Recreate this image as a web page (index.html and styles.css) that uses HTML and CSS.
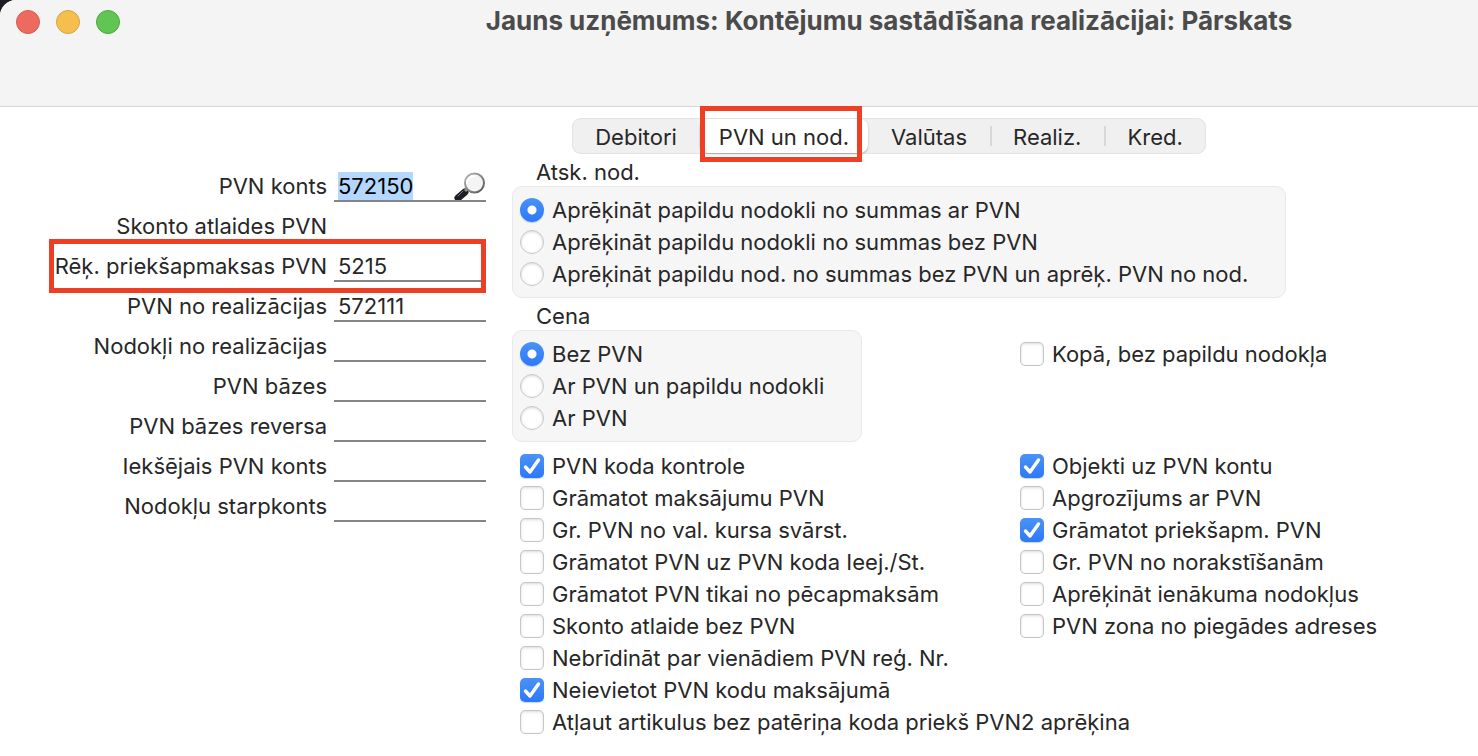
FILE: index.html
```html
<!DOCTYPE html>
<html lang="lv">
<head>
    <meta charset="UTF-8">
    <meta name="viewport" content="width=device-width, initial-scale=1.0">
    <title>Jauns uzņēmums: Kontējumu sastādīšana realizācijai: Pārskats</title>
    <link rel="stylesheet" href="styles.css">
</head>
<body>
    <div class="window">
        <header class="titlebar">
            <div class="window-buttons">
                <button type="button" class="window-button close" aria-label="Aizvērt"></button>
                <button type="button" class="window-button minimize" aria-label="Minimizēt"></button>
                <button type="button" class="window-button zoom" aria-label="Palielināt"></button>
            </div>
            <h1 class="window-title">Jauns uzņēmums: Kontējumu sastādīšana realizācijai: Pārskats</h1>
        </header>

        <nav class="tab-bar">
            <div class="tabs">
                <button type="button" class="tab">Debitori</button>
                <button type="button" class="tab active">PVN un nod.</button>
                <button type="button" class="tab">Valūtas</button>
                <button type="button" class="tab divided">Realiz.</button>
                <button type="button" class="tab divided">Kred.</button>
            </div>
        </nav>

        <form class="content">
            <div class="accounts">
                <div class="field">
                    <label for="pvnKonts">PVN konts</label>
                    <div class="field-box">
                        <input type="text" id="pvnKonts" value="572150">
                        <button type="button" class="lookup" aria-label="Meklēt">
                            <svg width="32" height="28" viewBox="0 0 32 28">
                                <defs>
                                    <linearGradient id="rim" x1="0" y1="0" x2="1" y2="1">
                                        <stop offset="0" stop-color="#b5b5b5"/>
                                        <stop offset="1" stop-color="#55575c"/>
                                    </linearGradient>
                                </defs>
                                <path d="M4 26 L11 20" stroke="#1d1f24" stroke-width="7" stroke-linecap="round"/>
                                <path d="M4 24 L9 19" stroke="#777b82" stroke-width="1" stroke-linecap="round"/>
                                <path d="M11 19 L14 16" stroke="#8a8d92" stroke-width="3"/>
                                <circle cx="20.500" cy="11" r="9.500" fill="#f4f4f4" stroke="url(#rim)" stroke-width="2"/>
                                <path d="M13 12 A7 7 0 0 1 21 4" fill="none" stroke="#fff" stroke-width="2"/>
                            </svg>
                        </button>
                    </div>
                </div>
                <div class="field">
                    <label for="skonto">Skonto atlaides PVN</label>
                    <div class="field-box plain"><input type="text" id="skonto"></div>
                </div>
                <div class="field marked">
                    <label for="priekspmaksas">Rēķ. priekšapmaksas PVN</label>
                    <div class="field-box"><input type="text" id="priekspmaksas" value="5215"></div>
                </div>
                <div class="field">
                    <label for="pvnRealiz">PVN no realizācijas</label>
                    <div class="field-box"><input type="text" id="pvnRealiz" value="572111"></div>
                </div>
                <div class="field">
                    <label for="nodokliRealiz">Nodokļi no realizācijas</label>
                    <div class="field-box"><input type="text" id="nodokliRealiz"></div>
                </div>
                <div class="field">
                    <label for="pvnBazes">PVN bāzes</label>
                    <div class="field-box"><input type="text" id="pvnBazes"></div>
                </div>
                <div class="field">
                    <label for="pvnReversa">PVN bāzes reversa</label>
                    <div class="field-box"><input type="text" id="pvnReversa"></div>
                </div>
                <div class="field">
                    <label for="ieksejais">Iekšējais PVN konts</label>
                    <div class="field-box"><input type="text" id="ieksejais"></div>
                </div>
                <div class="field">
                    <label for="starpkonts">Nodokļu starpkonts</label>
                    <div class="field-box"><input type="text" id="starpkonts"></div>
                </div>
            </div>

            <div class="options">
                <div class="group-title">Atsk. nod.</div>
                <div class="group">
                    <label class="option"><input type="radio" name="atsk" checked>Aprēķināt papildu nodokli no summas ar PVN</label>
                    <label class="option"><input type="radio" name="atsk">Aprēķināt papildu nodokli no summas bez PVN</label>
                    <label class="option"><input type="radio" name="atsk">Aprēķināt papildu nod. no summas bez PVN un aprēķ. PVN no nod.</label>
                </div>

                <div class="group-title">Cena</div>
                <div class="columns">
                    <div class="group">
                        <label class="option"><input type="radio" name="cena" checked>Bez PVN</label>
                        <label class="option"><input type="radio" name="cena">Ar PVN un papildu nodokli</label>
                        <label class="option"><input type="radio" name="cena">Ar PVN</label>
                    </div>
                    <div class="checks">
                        <label class="option"><input type="checkbox">Kopā, bez papildu nodokļa</label>
                    </div>
                </div>

                <div class="columns">
                    <div class="checks">
                        <label class="option"><input type="checkbox" checked>PVN koda kontrole</label>
                        <label class="option"><input type="checkbox">Grāmatot maksājumu PVN</label>
                        <label class="option"><input type="checkbox">Gr. PVN no val. kursa svārst.</label>
                        <label class="option"><input type="checkbox">Grāmatot PVN uz PVN koda Ieej./St.</label>
                        <label class="option"><input type="checkbox">Grāmatot PVN tikai no pēcapmaksām</label>
                        <label class="option"><input type="checkbox">Skonto atlaide bez PVN</label>
                        <label class="option"><input type="checkbox">Nebrīdināt par vienādiem PVN reģ. Nr.</label>
                        <label class="option"><input type="checkbox" checked>Neievietot PVN kodu maksājumā</label>
                        <label class="option"><input type="checkbox">Atļaut artikulus bez patēriņa koda priekš PVN2 aprēķina</label>
                    </div>
                    <div class="checks">
                        <label class="option"><input type="checkbox" checked>Objekti uz PVN kontu</label>
                        <label class="option"><input type="checkbox">Apgrozījums ar PVN</label>
                        <label class="option"><input type="checkbox" checked>Grāmatot priekšapm. PVN</label>
                        <label class="option"><input type="checkbox">Gr. PVN no norakstīšanām</label>
                        <label class="option"><input type="checkbox">Aprēķināt ienākuma nodokļus</label>
                        <label class="option"><input type="checkbox">PVN zona no piegādes adreses</label>
                    </div>
                </div>
            </div>
        </form>
    </div>

    <script>
        // Start with the first account selected
        document.getElementById('pvnKonts').select();
    </script>
</body>
</html>
```
FILE: styles.css
```css
* {
    box-sizing: border-box;
}

body {
    margin: 0;
    background: #1c1c24;
    font-family: Inter, "Liberation Sans", sans-serif;
    font-size: 22px;
    color: #272727;
}

button,
input {
    margin: 0;
    padding: 0;
    border: none;
    background: none;
    font: inherit;
    color: inherit;
}

.window {
    min-height: 100vh;
    background: #fff;
    border-top-left-radius: 16px;
    overflow: hidden;
}

/* Title bar */
.titlebar {
    display: flex;
    align-items: flex-start;
    height: 107px;
    padding-left: 16px;
    background: #f4f4f4;
    border-bottom: 1px solid #d6d6d6;
}

.window-buttons {
    display: flex;
    gap: 16px;
    width: 284px;
    padding-top: 10px;
}

.window-button {
    width: 24px;
    height: 24px;
    border-radius: 50%;
    border: 1px solid #d95a50;
    background: #ed6a5f;
}

.window-button.minimize {
    border-color: #d9a33c;
    background: #f5bf4f;
}

.window-button.zoom {
    border-color: #4fa73f;
    background: #61c554;
}

.window-title {
    flex: 1;
    margin: 0;
    padding-top: 5px;
    text-align: center;
    font-size: 26px;
    line-height: 32px;
    font-weight: 700;
    color: #4b4b4b;
}

/* Tabs */
.tab-bar {
    display: flex;
    justify-content: center;
    padding: 11px 0 0 300px;
}

.tabs {
    display: flex;
    height: 36px;
    padding: 1px 0;
    border-radius: 9px;
    background: #f0f0f0;
    box-shadow: inset 0 0 0 1px #e4e4e4;
}

.tab {
    position: relative;
    padding: 2px 23px 0;
}

.tab.active {
    padding: 2px 19px 0;
    border-radius: 8px;
    background: #fff;
    box-shadow: 0 1px 2px rgba(0, 0, 0, 0.3);
}

.tab.active::after {
    content: "";
    position: absolute;
    inset: -13px 6px -9px 0;
    border: 5px solid #ee3f24;
}

.tab.divided::before {
    content: "";
    position: absolute;
    left: 0;
    top: 7px;
    width: 2px;
    height: 20px;
    background: #d8d8d8;
}

/* Form */
.content {
    display: flex;
    align-items: flex-start;
    gap: 26px;
}

.accounts {
    display: flex;
    flex-direction: column;
    gap: 8px;
    width: 486px;
    flex-shrink: 0;
    padding-top: 16px;
}

.field {
    position: relative;
    display: flex;
    justify-content: flex-end;
    gap: 7px;
    line-height: 32px;
}

.field.marked::after {
    content: "";
    position: absolute;
    inset: -11px 0 -11px 49px;
    border: 5px solid #ee3f24;
}

.field-box {
    display: flex;
    width: 152px;
    height: 32px;
    padding-left: 4px;
    border-bottom: 2px solid #858585;
}

.field-box.plain {
    border-bottom-color: transparent;
}

.field-box input {
    flex: 1;
    min-width: 0;
    padding-top: 2px;
    outline: none;
    line-height: 28px;
}

.field-box input::selection {
    background: #b3d7ff;
    color: #000;
}

.lookup {
    width: 32px;
    height: 30px;
    padding-top: 2px;
}

.lookup svg {
    display: block;
}

.options {
    flex: 1;
    min-width: 0;
    padding-top: 4px;
}

.group-title {
    padding-left: 24px;
    line-height: 28px;
}

.group {
    width: fit-content;
    margin-bottom: 4px;
    padding: 7px 37px 7px 7px;
    border: 1px solid #e9e9e9;
    border-radius: 10px;
    background: #f6f6f6;
}

.columns {
    display: grid;
    grid-template-columns: 500px 1fr;
}

.checks {
    padding: 8px 0 0 8px;
}

.columns + .columns .checks {
    padding-top: 4px;
}

.option {
    display: flex;
    align-items: center;
    gap: 8px;
    height: 32px;
    white-space: nowrap;
}

.option input {
    appearance: none;
    flex-shrink: 0;
    width: 24px;
    height: 24px;
    border: 1px solid #c6c6c6;
    border-radius: 5px;
    background: #fff;
    box-shadow: inset 0 1px 3px rgba(0, 0, 0, 0.15);
}

.option input[type="radio"] {
    border-radius: 50%;
}

.option input:checked {
    border: none;
    background: linear-gradient(#4a93f9, #2d78f6);
    box-shadow: 0 1px 1px rgba(45, 120, 246, 0.3);
}

.option input[type="radio"]:checked {
    background: radial-gradient(circle, #fff 4px, transparent 5px), linear-gradient(#4a93f9, #2d78f6);
}

.option input[type="checkbox"]:checked {
    background: url("data:image/svg+xml,%3Csvg xmlns='http://www.w3.org/2000/svg' viewBox='0 0 24 24'%3E%3Cpath d='M5.5 13 L10 18 L18.5 6' fill='none' stroke='white' stroke-width='3.4' stroke-linecap='round' stroke-linejoin='round'/%3E%3C/svg%3E"), linear-gradient(#4a93f9, #2d78f6);
}
```
